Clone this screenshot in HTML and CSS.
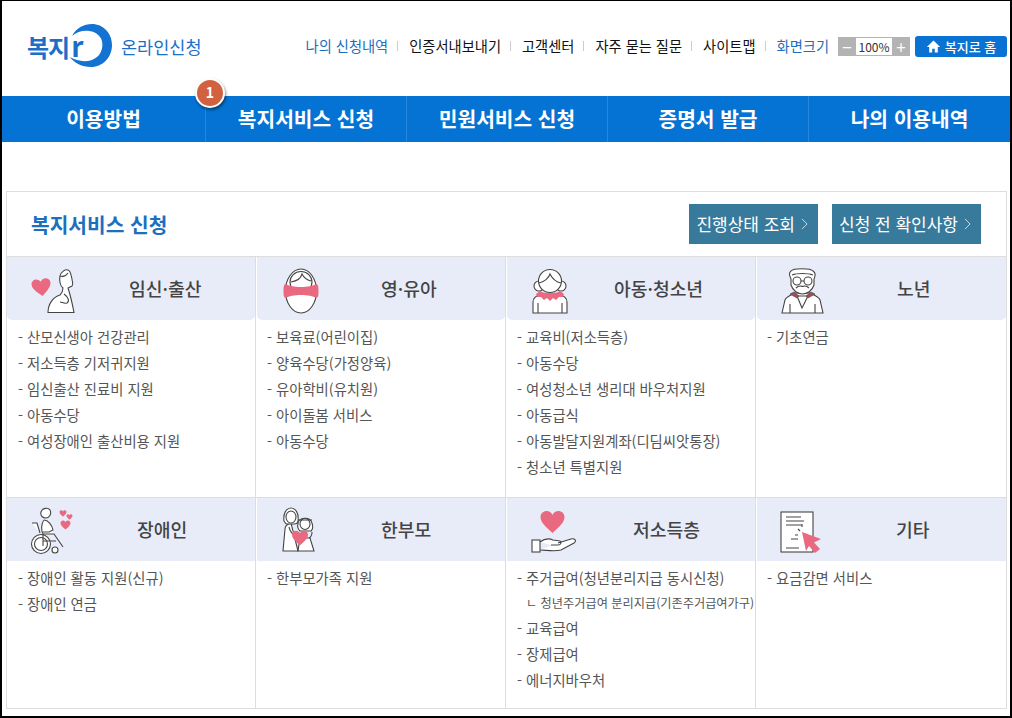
FILE: index.html
```html
<!DOCTYPE html>
<html lang="ko">
<head>
  <meta charset="UTF-8">
  <meta name="viewport" content="width=device-width, initial-scale=1.0">
  <title>복지로 온라인신청</title>
  <link rel="stylesheet" href="styles.css">
</head>
<body>
  <svg class="defs" width="0" height="0">
    <symbol id="heart" viewBox="0 0 24 22">
      <path d="M12 21C5 15 1 11 1 6.5 1 3 4 1 6.5 1 9 1 11 2.5 12 4.5 13 2.5 15 1 17.5 1 20 1 23 3 23 6.5 23 11 19 15 12 21Z"/>
    </symbol>
  </svg>
  <div class="frame">
    <header class="top">
      <a class="logo" href="#">
        <svg class="logo-moon" viewBox="65 20 50 50" width="50" height="50"><path d="M72 36C76 28 84 24 92 24 103 24 112 33 112 45 112 57 103 67 91 67 82 67 74 63 70 57 78 62 90 63 97 57 103 52 104 42 100 37 94 29 80 29 72 36Z"/></svg>
        <span class="logo-mark">복지<span class="logo-r">r</span></span>
        <span class="logo-sub">온라인신청</span>
      </a>
      <div class="util">
        <a class="util-link blue" href="#">나의 신청내역</a>
        <a class="util-link" href="#">인증서내보내기</a>
        <a class="util-link" href="#">고객센터</a>
        <a class="util-link" href="#">자주 묻는 질문</a>
        <a class="util-link" href="#">사이트맵</a>
        <span class="util-link blue">화면크기</span>
        <div class="zoom">
          <span class="zoom-btn">−</span>
          <span class="zoom-val">100%</span>
          <span class="zoom-btn">+</span>
        </div>
        <a class="home" href="#">
          <svg viewBox="0 0 14 14" width="15" height="15"><path d="M7 1.500L0.800 7.500H3V12.500H5.800V9H8.200V12.500H11V7.500H13.200Z" fill="#fff"/></svg>
          복지로 홈
        </a>
      </div>
    </header>

    <nav class="gnb">
      <a class="gnb-item first" href="#">이용방법</a>
      <a class="gnb-item" href="#"><span class="badge">1</span>복지서비스 신청</a>
      <a class="gnb-item" href="#">민원서비스 신청</a>
      <a class="gnb-item" href="#">증명서 발급</a>
      <a class="gnb-item" href="#">나의 이용내역</a>
    </nav>

    <section class="panel">
      <div class="panel-head">
        <h2>복지서비스 신청</h2>
        <div class="panel-btns">
          <a class="btn" href="#">진행상태 조회<svg viewBox="0 0 8 14" width="7" height="12"><path d="M1 1L7 7 1 13" fill="none" stroke="#dfeaf0"/></svg></a>
          <a class="btn" href="#">신청 전 확인사항<svg viewBox="0 0 8 14" width="7" height="12"><path d="M1 1L7 7 1 13" fill="none" stroke="#dfeaf0"/></svg></a>
        </div>
      </div>

      <div class="cats">
        <div class="cat preg">
          <div class="cat-head">
            <svg class="ico" viewBox="0 0 60 50">
              <use href="#heart" class="pink" x="0" y="0" width="21" height="19" transform="translate(4 14) rotate(-8 10 9)"/>
              <path d="M21 48.500C21 40 26 33 33 31C35 29 36 27 36 24C33 22 32 16 33 12C34 8 38 5 41 6C44 7 44 12 45 15C45 18 47 20 45 22L41 24C43 30 45 38 47 48.500Z"/>
              <path d="M33 12C36 13 39 12 41 9M37 30C41 33 43 37 40 39 37 40 35 38 33 38"/>
            </svg>
            <h3>임신·출산</h3>
          </div>
          <ul>
            <li>- 산모신생아 건강관리</li>
            <li>- 저소득층 기저귀지원</li>
            <li>- 임신출산 진료비 지원</li>
            <li>- 아동수당</li>
            <li>- 여성장애인 출산비용 지원</li>
          </ul>
        </div>

        <div class="cat baby">
          <div class="cat-head">
            <svg class="ico" viewBox="0 0 60 50">
              <ellipse cx="24" cy="27" rx="15.500" ry="22"/>
              <ellipse cx="24" cy="18" rx="11" ry="10.500"/>
              <path d="M14 18C20 17 24 14 25 10C27 14 30 16 34 17"/>
              <path class="pink" d="M9 20C14 24 34 24 39 20 41 20 41.500 22 41.500 27 41.500 32 41 34 39 34 34 30 14 30 9 34 7 34 6.500 32 6.500 27 6.500 22 7 20 9 20Z"/>
            </svg>
            <h3>영·유아</h3>
          </div>
          <ul>
            <li>- 보육료(어린이집)</li>
            <li>- 양육수당(가정양육)</li>
            <li>- 유아학비(유치원)</li>
            <li>- 아이돌봄 서비스</li>
            <li>- 아동수당</li>
          </ul>
        </div>

        <div class="cat child">
          <div class="cat-head">
            <svg class="ico" viewBox="0 0 60 50">
              <circle cx="12" cy="22" r="5"/>
              <circle cx="34" cy="22" r="5"/>
              <path d="M6 49V38C6 33 11 31 15 30H31C35 31 40 33 40 38V49Z"/>
              <path d="M11 49V39M35 49V39"/>
              <circle cx="23" cy="17" r="11.500"/>
              <path d="M12 19C17 18 22 14 23 10C25 14 29 18 34 19"/>
              <path class="pink" d="M13 27C17 30 29 30 33 27L37 30 36 33 32 33 29 36 26 34 23 37 20 34 17 36 14 33 10 33 9 30Z"/>
            </svg>
            <h3>아동·청소년</h3>
          </div>
          <ul>
            <li>- 교육비(저소득층)</li>
            <li>- 아동수당</li>
            <li>- 여성청소년 생리대 바우처지원</li>
            <li>- 아동급식</li>
            <li>- 아동발달지원계좌(디딤씨앗통장)</li>
            <li>- 청소년 특별지원</li>
          </ul>
        </div>

        <div class="cat old">
          <div class="cat-head">
            <svg class="ico" viewBox="0 0 60 50">
              <path d="M5 49L8 36C9 33 14 31 18 29H33C37 31 42 33 43 36L46 49Z"/>
              <path d="M13 49V40M38 49V40M25 44L20 32H31Z"/>
              <path d="M14 7C16 4 34 4 36 7C39 9 38 13 37 15V21C35 27 30 30 25.500 30 21 30 16 27 14 21V15C13 13 11 9 14 7Z"/>
              <path d="M15 11C20 9 31 9 36 11"/>
              <circle cx="20" cy="17" r="4"/>
              <circle cx="31" cy="17" r="4"/>
              <path d="M24 17H27M19 24C22 21 24 22 25.500 22.500 27 22 29 21 32 24"/>
              <path class="maroon" d="M17 28L22 32 20 34 13 30ZM34 28L29 32 31 34 38 30Z"/>
            </svg>
            <h3>노년</h3>
          </div>
          <ul>
            <li>- 기초연금</li>
          </ul>
        </div>

        <div class="cat dis row2">
          <div class="cat-head">
            <svg class="ico" viewBox="0 0 60 50">
              <circle cx="14" cy="39" r="9.500"/>
              <circle cx="14" cy="39" r="6.500"/>
              <circle cx="28" cy="45" r="3"/>
              <path d="M5 18H10L13 28M17 15C14 19 14 25 16 29H27L36 42"/>
              <path d="M17 15C21 15 25 20 26 25L22 27H16"/>
              <path d="M14 7C15 3 21 2 23 5C25 9 22 13 19 13C16 13 13 11 14 7Z"/>
              <path d="M16 29V41M16 36H29"/>
              <use href="#heart" class="pink" x="32" y="5" width="8" height="7"/>
              <use href="#heart" class="pink" x="39" y="9" width="7" height="6"/>
              <use href="#heart" class="pink" x="33" y="15" width="11" height="10"/>
            </svg>
            <h3>장애인</h3>
          </div>
          <ul>
            <li>- 장애인 활동 지원(신규)</li>
            <li>- 장애인 연금</li>
          </ul>
        </div>

        <div class="cat single row2">
          <div class="cat-head">
            <svg class="ico" viewBox="0 0 60 50">
              <path d="M6 46L8 24C8 20 11 19 14 18L21 46Z"/>
              <path d="M7 16C6 9 9 3 14 3 19 3 22 9 21 16 21 18 19 19 17 19H10C9 19 8 18 7 16Z"/>
              <ellipse cx="14" cy="12" rx="5" ry="6"/>
              <path d="M21 46L23 33 33 33 37 46Z"/>
              <path d="M21 19C21 12 33 11 35 18 36 21 36 24 34 26H23C21 24 20 22 21 19Z"/>
              <ellipse cx="28" cy="19" rx="5" ry="5.500"/>
              <path d="M21 15H35M12 22C13 26 15 29 18 30M35 27C35 30 34 32 32 33"/>
              <use href="#heart" class="pink" x="14" y="25" width="18" height="16"/>
            </svg>
            <h3>한부모</h3>
          </div>
          <ul>
            <li>- 한부모가족 지원</li>
          </ul>
        </div>

        <div class="cat low row2">
          <div class="cat-head">
            <svg class="ico" viewBox="0 0 60 50">
              <use href="#heart" class="pink" x="12" y="5" width="27" height="24"/>
              <rect x="5" y="35" width="8" height="12"/>
              <path d="M13 37C17 34 22 33 26 35L33 36C35 37 34 40 31 40H24M31 38L44 34C48 33 50 36 47 38L34 45C27 47 19 45 13 45"/>
            </svg>
            <h3>저소득층</h3>
          </div>
          <ul>
            <li>- 주거급여(청년분리지급 동시신청)</li>
            <li class="sub">ㄴ 청년주거급여 분리지급(기존주거급여가구)</li>
            <li>- 교육급여</li>
            <li>- 장제급여</li>
            <li>- 에너지바우처</li>
          </ul>
        </div>

        <div class="cat etc row2">
          <div class="cat-head">
            <svg class="ico" viewBox="0 0 60 50">
              <rect x="4" y="7" width="32" height="40"/>
              <path d="M9 12H24M9 16H27M9 20H25M14 34H21M9 43H22M25 19V22M21 24L23 26M18 30H21"/>
              <path class="pink" d="M25 27L44 34 37 37.500 43 44 38 48 32 41 29 46Z"/>
            </svg>
            <h3>기타</h3>
          </div>
          <ul>
            <li>- 요금감면 서비스</li>
          </ul>
        </div>
      </div>
    </section>
  </div>
</body>
</html>
```

FILE: styles.css
```css
* {
  box-sizing: border-box;
}
body {
  margin: 0;
  font-family: "Noto Sans CJK KR", "Noto Sans", sans-serif;
  background-color: #fff;
  color: #555;
}
a {
  color: inherit;
  text-decoration: none;
}
ul {
  list-style: none;
  margin: 0;
  padding: 0;
}
h2, h3 {
  margin: 0;
}
.defs {
  position: absolute;
}
.frame {
  width: 1012px;
  height: 718px;
  overflow: hidden;
  border: solid #000;
  border-width: 1px 2px 2px;
}

/* top bar */
.top {
  height: 95px;
  display: flex;
  justify-content: space-between;
  align-items: center;
  padding: 0 3px 5px 25px;
}
.logo {
  position: relative;
  display: flex;
  align-items: center;
  color: #1b6fc9;
}
.logo-moon {
  position: absolute;
  left: 38px;
  top: -7px;
  fill: #1472d2;
}
.logo-mark {
  width: 94px;
  font-size: 24px;
  font-weight: 700;
  line-height: 36px;
  letter-spacing: -1px;
}
.logo-r {
  font-size: 28px;
  margin-left: 2px;
}
.logo-sub {
  font-size: 17.500px;
  line-height: 24px;
  padding-top: 2px;
}
.util {
  display: flex;
  align-items: center;
}
.util-link {
  font-size: 14.250px;
  line-height: 20px;
  color: #111;
  padding-right: 10px;
  margin-right: 11px;
  position: relative;
}
.util-link::after {
  content: "";
  position: absolute;
  right: 0;
  top: 5px;
  height: 10px;
  border-right: 1px solid #ccc;
}
.util-link.blue {
  color: #1b6fbd;
}
.util-link:nth-last-child(3) {
  padding-right: 0;
  margin-right: 9px;
}
.util-link:nth-last-child(3)::after {
  display: none;
}
.zoom {
  display: flex;
  height: 19px;
  margin-right: 5px;
  background-color: #b3b3b3;
  padding: 1px 0;
}
.zoom-btn {
  width: 18px;
  color: #fff;
  font-size: 17px;
  line-height: 17px;
  text-align: center;
}
.zoom-val {
  width: 36px;
  background-color: #fff;
  color: #333;
  font-size: 12px;
  line-height: 17px;
  text-align: center;
}
.home {
  width: 92px;
  height: 21px;
  border-radius: 3px;
  background-color: #0a72d2;
  color: #fff;
  font-size: 13px;
  font-weight: 500;
  display: flex;
  align-items: center;
  justify-content: center;
  gap: 4px;
}

/* main menu */
.gnb {
  height: 46px;
  display: grid;
  grid-template-columns: 203px 201px 201px 201px 202px;
  background-color: #0473d3;
}
.gnb-item {
  position: relative;
  color: #fff;
  font-size: 20.300px;
  font-weight: 700;
  line-height: 44px;
  text-align: center;
  border-left: 1px solid #2a86da;
}
.gnb-item.first {
  border-left: 0;
}
.badge {
  position: absolute;
  left: -11px;
  top: -18px;
  width: 30px;
  height: 30px;
  border: 2px solid #fff;
  border-radius: 50%;
  background-color: #d2623f;
  box-shadow: 1px 2px 3px rgba(0, 0, 0, 0.45);
  font-size: 14px;
  line-height: 25px;
}

/* panel */
.panel {
  margin: 49px 3px 0 4px;
  height: 518px;
  border: 1px solid #ddd;
}
.panel-head {
  height: 65px;
  display: flex;
  justify-content: space-between;
  align-items: center;
  padding: 0 25px 1px 24px;
  border-bottom: 1px solid #ddd;
}
.panel-head h2 {
  font-size: 20.300px;
  font-weight: 700;
  line-height: 28px;
  color: #1b6fbd;
}
.panel-btns {
  display: flex;
  gap: 14px;
}
.btn {
  height: 40px;
  padding: 0 10px 0 7px;
  display: flex;
  align-items: center;
  gap: 6px;
  background-color: #377a9c;
  color: #fff;
  font-size: 17px;
}
.cats {
  display: grid;
  grid-template-columns: 249px 250px 250px 250px;
  grid-template-rows: 241px 211px;
}
.cat {
  border-right: 1px solid #ddd;
  border-bottom: 1px solid #ddd;
}
.cat:nth-child(4n) {
  border-right: 0;
}
.cat:nth-child(n+5) {
  border-bottom: 0;
}
.cat-head {
  height: 63px;
  display: flex;
  align-items: center;
  padding-left: 20px;
  margin-left: 1px;
  background-color: #e8ecf8;
  border-radius: 0 0 5px 5px;
}
.cat:nth-child(4n+1) .cat-head {
  margin-left: 0;
}
.row2 .cat-head {
  border-radius: 0;
}
.ico {
  flex: none;
  width: 60px;
  height: 50px;
  fill: #fff;
  stroke: #444;
  stroke-width: 1.100;
}
.ico .pink {
  fill: #e96a80;
  stroke: none;
}
.ico .maroon {
  fill: #a8485a;
  stroke: #444;
  stroke-width: 0.600;
}
.cat-head h3 {
  font-size: 18.200px;
  font-weight: 500;
  line-height: 26px;
  color: #444;
  padding-bottom: 2px;
}
.preg h3 { margin-left: 42px; }
.baby h3 { margin-left: 44px; }
.child h3 { margin-left: 27px; }
.old h3 { margin-left: 60px; }
.dis h3 { margin-left: 50px; }
.single h3 { margin-left: 44px; }
.low h3 { margin-left: 46px; }
.etc h3 { margin-left: 59px; }
.cat ul {
  padding: 4px 0 0 11px;
}
.cat li {
  font-size: 14.350px;
  line-height: 26px;
  white-space: nowrap;
}
.cat li.sub {
  font-size: 12.200px;
  line-height: 24px;
  padding-left: 9px;
}
```
